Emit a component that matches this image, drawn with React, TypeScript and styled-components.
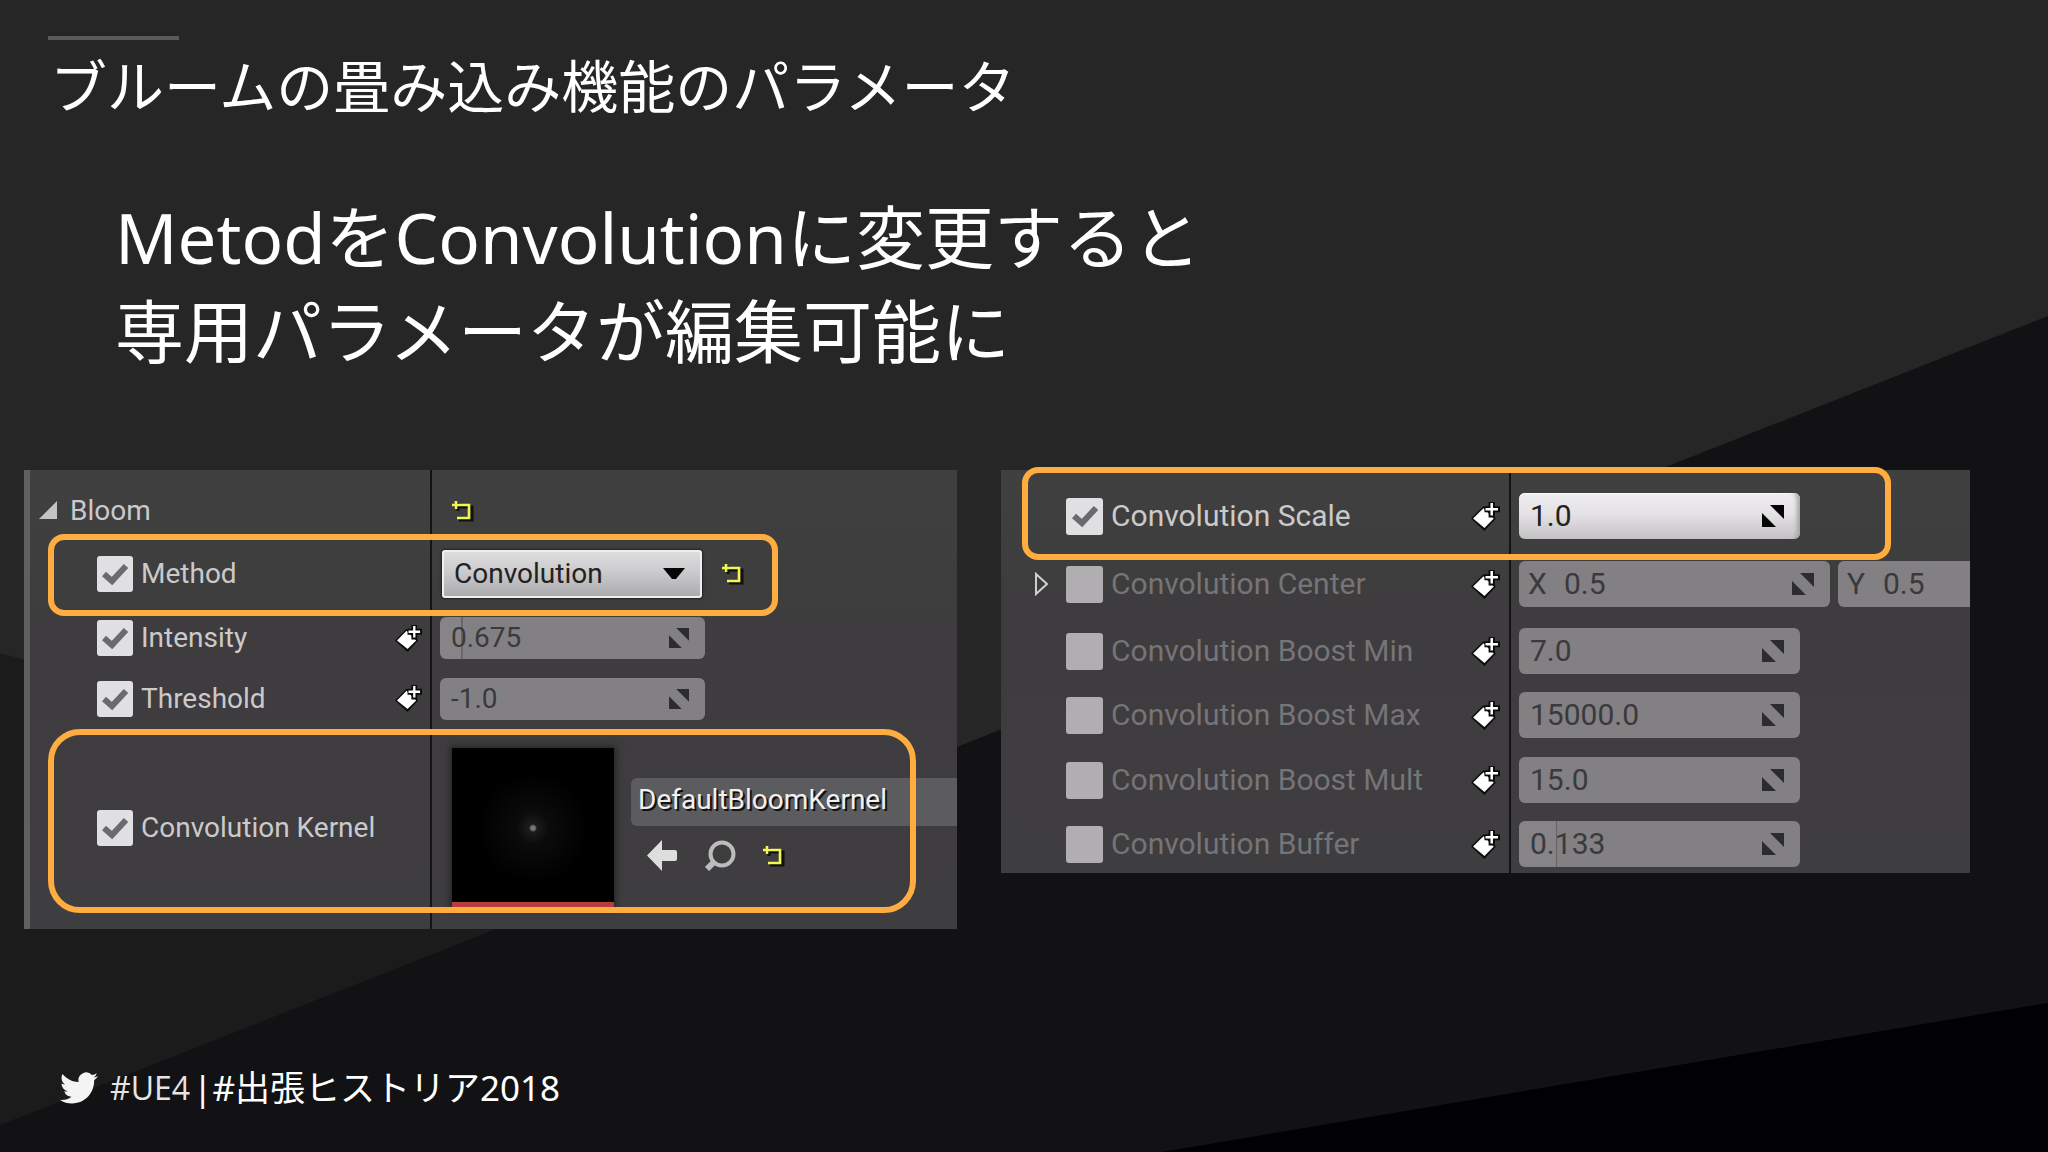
import React, { useState } from "react";
import styled, { createGlobalStyle, css } from "styled-components";

const GlobalStyle = createGlobalStyle`
  *, *::before, *::after { box-sizing: border-box; }
  html { background: #121114; }
  body { margin: 0; }
`;

const slideFont = `"Noto Sans", "Noto Sans CJK JP", sans-serif`;
const editorFont = `Roboto, "Noto Sans", sans-serif`;

const Slide = styled.main`
  position: relative;
  display: flex;
  flex-direction: column;
  min-height: 100vh;
  overflow: hidden;
  background: #262626;
  color: #fff;
  font-family: ${slideFont};
`;

const Backdrop = styled.svg`
  position: absolute;
  inset: 0;
  width: 100%;
  height: 100%;
`;

const Header = styled.header`
  position: relative;
  padding: 36px 48px 0;
`;

const Accent = styled.div`
  width: 131px;
  height: 4px;
  background: #5a5a5a;
`;

const Title = styled.h1`
  margin: 14px 0 0 2px;
  font-size: 57px;
  line-height: 64px;
  font-weight: 400;
`;

const Lead = styled.p`
  position: relative;
  margin: 72px 0 0;
  padding: 0 115px;
  font-size: 69px;
  line-height: 94px;
`;

const Panels = styled.div`
  position: relative;
  display: grid;
  grid-template-columns: 933fr 969fr;
  align-items: start;
  gap: 44px;
  margin-top: 92px;
  padding: 0 78px 0 24px;
`;

const Panel = styled.section<{ $split: number; $size: number; $edge?: boolean }>`
  min-width: 0;
  border-left: ${(p) => (p.$edge ? "6px solid #606060" : "0")};
  background: linear-gradient(#141414, #141414) ${(p) => p.$split}px 0 / 2px 100% no-repeat,
    linear-gradient(#3f403f, #3e3c3e 40%, #3e3d3f);
  font-family: ${editorFont};
  font-size: ${(p) => p.$size}px;
  line-height: 36px;
`;

const BloomPanel = styled(Panel)`
  padding: 9px 0 1px;
`;

const ScalePanel = styled(Panel)`
  padding: 23px 0 6px;
  display: grid;
  grid-template-rows: 68px 67px 64px 65px 64px 46px;
  align-items: start;
`;

const Row = styled.div<{ $label: number; $height: number }>`
  position: relative;
  display: grid;
  grid-template-columns: ${(p) => p.$label}px minmax(0, 1fr);
  align-items: center;
  height: ${(p) => p.$height}px;
`;

const NameCell = styled.div<{ $indent: number; $end?: number }>`
  display: flex;
  align-items: center;
  gap: 8px;
  padding-left: ${(p) => p.$indent}px;
  padding-right: ${(p) => p.$end ?? 0}px;
`;

const ValueCell = styled.div<{ $pad: number; $gap?: number }>`
  display: flex;
  align-items: center;
  gap: ${(p) => p.$gap ?? 20}px;
  min-width: 0;
  padding-left: ${(p) => p.$pad}px;
`;

const Name = styled.label<{ $dim?: boolean }>`
  flex: 1;
  white-space: nowrap;
  color: ${(p) => (p.$dim ? "#757477" : "#cbcacb")};
`;

const GroupName = styled.h2`
  margin: 0 0 0 4px;
  font: inherit;
  color: #cbcacb;
`;

const IconButton = styled.button`
  display: flex;
  flex: none;
  padding: 0;
  border: 0;
  background: none;
  cursor: pointer;
`;

const Highlight = styled.div<{ $top: number; $bottom: number; $left: number; $width: number; $radius: number }>`
  position: absolute;
  z-index: 1;
  top: ${(p) => p.$top}px;
  bottom: ${(p) => p.$bottom}px;
  left: ${(p) => p.$left}px;
  width: ${(p) => p.$width}px;
  border: 6px solid #ffac41;
  border-radius: ${(p) => p.$radius}px;
  pointer-events: none;
`;

const Stack = styled.span`
  display: grid;
  flex: none;
  align-items: center;
  > * { grid-area: 1 / 1; }
  > svg { pointer-events: none; }
`;

const Box = styled.input<{ $size: number }>`
  appearance: none;
  width: ${(p) => p.$size}px;
  height: ${(p) => p.$size}px;
  margin: 0;
  border-radius: 3px;
  background: #b0aeb1;
  &:checked { background: #e0dfe1; }
`;

const Tick = styled.svg`
  justify-self: center;
`;

const Field = styled.div<{ $width?: number; $height: number; $lit?: boolean; $fill?: number }>`
  display: flex;
  align-items: center;
  flex: ${(p) => (p.$width ? "none" : "1")};
  width: ${(p) => (p.$width ? `${p.$width}px` : "auto")};
  min-width: 0;
  height: ${(p) => p.$height}px;
  padding: 0 16px 0 11px;
  border-radius: ${(p) => (p.$width ? "6px" : "6px 0 0 6px")};
  background: #828083;
  color: #3a393b;
  ${(p) =>
    p.$fill &&
    css`
      background: linear-gradient(
        to right,
        #868487 ${p.$fill}%,
        #646265 ${p.$fill}%,
        #646265 calc(${p.$fill}% + 1px),
        #828083 calc(${p.$fill}% + 2px)
      );
    `}
  ${(p) =>
    p.$lit &&
    css`
      background: linear-gradient(#efedef, #e4e2e4 45%, #c4c2c4);
      box-shadow: inset -6px 0 4px -3px #a5a3a5, inset 0 1px 0 #fff;
      color: #222;
    `}
`;

const Axis = styled.span`
  width: 36px;
  margin-left: -2px;
  flex: none;
`;

const ValueInput = styled.input`
  flex: 1;
  min-width: 0;
  width: 0;
  padding: 0;
  border: 0;
  outline: 0;
  background: none;
  color: inherit;
  font: inherit;
`;

const Select = styled.select`
  appearance: none;
  width: 260px;
  height: 48px;
  padding: 0 48px 0 10px;
  border: 2px solid #efeff0;
  border-radius: 3px;
  background: linear-gradient(#dddcde, #cbcacc 45%, #acabad);
  box-shadow: 0 0 2px 1px #222;
  color: #222;
  font: inherit;
`;

const Caret = styled.svg`
  justify-self: end;
  margin-right: 17px;
`;

const Thumb = styled.div`
  flex: none;
  width: 162px;
  height: 160px;
  border-bottom: 6px solid #b83c3c;
  background: radial-gradient(circle at 50% 52%, #777 0 2px, #1c1c1c 4px, #0b0b0b 16px, #000 56px);
  box-shadow: 0 0 6px 2px #262626;
`;

const Asset = styled.div`
  flex: 1;
  min-width: 0;
  padding-bottom: 6px;
`;

const AssetName = styled.div`
  height: 48px;
  padding-left: 7px;
  border-radius: 6px 0 0 6px;
  background: #5c5b5d;
  color: #f0f0f0;
  line-height: 44px;
  text-shadow: 2px 2px 0 #111;
`;

const AssetTools = styled.div`
  display: flex;
  align-items: center;
  gap: 27px;
  margin-top: 14px;
  padding-left: 16px;
`;

const Footer = styled.footer`
  position: relative;
  display: flex;
  align-items: center;
  margin-top: auto;
  padding: 0 60px 41px;
  font-size: 35px;
  line-height: 46px;
`;

const Engine = styled.span`
  margin: 0 3px 0 12px;
  font-family: "Open Sans", sans-serif;
  font-size: 32px;
  font-weight: 500;
  color: #e4e4e4;
`;

function ResetIcon() {
  return (
    <svg width="22" height="22" viewBox="0 0 22 22" fill="none" strokeWidth="3">
      <path d="M1 6H19V19H6M5 2V10" stroke="#111" transform="translate(1 1)" />
      <path d="M0 5H17V18H5M4 1V9" stroke="#f2f752" strokeWidth="2.6" />
    </svg>
  );
}

function KeyIcon({ size }: { size: number }) {
  return (
    <svg width={size} height={size} viewBox="0 0 28 28">
      <path d="M0 16 12 4 24 16 13 28Z" fill="#0b0b0b" />
      <path d="M2 16 12 6 22 16 13 25Z" fill="#fff" />
      <path d="M20 0V15M13 7H28" stroke="#0b0b0b" strokeWidth="6" />
      <path d="M20 1V13M14 7H26" stroke="#fff" strokeWidth="2.4" />
    </svg>
  );
}

function SpinIcon({ size, color }: { size: number; color: string }) {
  return (
    <svg width={size} height={size} viewBox="0 0 22 22" fill={color}>
      <path d="M8 0H22V14Z" />
      <path d="M0 8V22H14Z" />
    </svg>
  );
}

function Check({ id, size, on }: { id: string; size: number; on?: boolean }) {
  const [checked, setChecked] = useState(!!on);
  return (
    <Stack>
      <Box id={id} type="checkbox" $size={size} checked={checked} onChange={() => setChecked(!checked)} />
      {checked && (
        <Tick width="26" height="24" viewBox="0 0 26 24">
          <path d="M2 12 10 19 24 4" fill="none" stroke="#6b6a6c" strokeWidth="6" />
        </Tick>
      )}
    </Stack>
  );
}

function NumberField(props: {
  label: string;
  value: string;
  width?: number;
  height: number;
  icon: number;
  lit?: boolean;
  fill?: number;
  axis?: string;
}) {
  return (
    <Field $width={props.width} $height={props.height} $lit={props.lit} $fill={props.fill}>
      {props.axis && <Axis>{props.axis}</Axis>}
      <ValueInput aria-label={props.label} defaultValue={props.value} />
      {props.width && <SpinIcon size={props.icon} color={props.lit ? "#050505" : "#2c2b2d"} />}
    </Field>
  );
}

const bloomNumbers = [
  { name: "Intensity", value: "0.675", height: 64, fill: 8 },
  { name: "Threshold", value: "-1.0", height: 57 },
];

const scaleNumbers = [
  { name: "Convolution Boost Min", value: "7.0" },
  { name: "Convolution Boost Max", value: "15000.0" },
  { name: "Convolution Boost Mult", value: "15.0" },
  { name: "Convolution Buffer", value: "0.133", fill: 13 },
];

const idOf = (name: string) => name.toLowerCase().replace(/ /g, "-");

function Bloom() {
  return (
    <BloomPanel $split={400} $size={28} $edge>
      <Row $label={402} $height={63}>
        <NameCell $indent={9}>
          <IconButton aria-label="Collapse Bloom">
            <svg width="19" height="19" viewBox="0 0 19 19">
              <path d="M18 0V18H0Z" fill="#c4c4c4" />
            </svg>
          </IconButton>
          <GroupName>Bloom</GroupName>
        </NameCell>
        <ValueCell $pad={20}>
          <IconButton aria-label="Reset Bloom"><ResetIcon /></IconButton>
        </ValueCell>
      </Row>
      <Row $label={402} $height={64}>
        <NameCell $indent={67}>
          <Check id="method-on" size={36} on />
          <Name htmlFor="method-on">Method</Name>
        </NameCell>
        <ValueCell $pad={10}>
          <Stack>
            <Select aria-label="Method" defaultValue="Convolution">
              <option>Convolution</option>
              <option>Standard</option>
            </Select>
            <Caret width="22" height="12" viewBox="0 0 22 12">
              <path d="M0 0H22L13 11H9Z" fill="#050505" />
            </Caret>
          </Stack>
          <IconButton aria-label="Reset Method"><ResetIcon /></IconButton>
        </ValueCell>
        <Highlight $top={-8} $bottom={-10} $left={18} $width={730} $radius={16} />
      </Row>
      {bloomNumbers.map((n) => (
        <Row key={n.name} $label={402} $height={n.height}>
          <NameCell $indent={67} $end={10}>
            <Check id={idOf(n.name)} size={36} on />
            <Name htmlFor={idOf(n.name)}>{n.name}</Name>
            <IconButton aria-label={`Add key for ${n.name}`}><KeyIcon size={27} /></IconButton>
          </NameCell>
          <ValueCell $pad={8}>
            <NumberField label={n.name} value={n.value} width={265} height={42} icon={20} fill={n.fill} />
          </ValueCell>
        </Row>
      ))}
      <Row $label={402} $height={201}>
        <NameCell $indent={67}>
          <Check id="kernel-on" size={36} on />
          <Name htmlFor="kernel-on">Convolution Kernel</Name>
        </NameCell>
        <ValueCell $pad={20} $gap={17}>
          <Thumb />
          <Asset>
            <AssetName>DefaultBloomKernel</AssetName>
            <AssetTools>
              <IconButton aria-label="Use selected asset">
                <svg width="31" height="31" viewBox="0 0 31 31">
                  <path d="M0 15.500 15 0V10H28Q30 10 30 12V19Q30 21 28 21H15V31Z" fill="#dedede" />
                </svg>
              </IconButton>
              <IconButton aria-label="Find in content browser">
                <svg width="31" height="31" viewBox="0 0 31 31" fill="none" stroke="#bcbcbc">
                  <circle cx="17" cy="14" r="11.500" strokeWidth="4" />
                  <path d="M9 22 2 29" strokeWidth="6" />
                </svg>
              </IconButton>
              <IconButton aria-label="Reset Convolution Kernel"><ResetIcon /></IconButton>
            </AssetTools>
          </Asset>
        </ValueCell>
        <Highlight $top={2} $bottom={15} $left={18} $width={868} $radius={32} />
      </Row>
    </BloomPanel>
  );
}

function ConvolutionSettings() {
  return (
    <ScalePanel $split={508} $size={30}>
      <Row $label={510} $height={46}>
        <NameCell $indent={65} $end={11}>
          <Check id="scale-on" size={37} on />
          <Name htmlFor="scale-on">Convolution Scale</Name>
          <IconButton aria-label="Add key for Convolution Scale"><KeyIcon size={29} /></IconButton>
        </NameCell>
        <ValueCell $pad={8}>
          <NumberField label="Convolution Scale" value="1.0" width={281} height={46} icon={22} lit />
        </ValueCell>
        <Highlight $top={-26} $bottom={-21} $left={21} $width={869} $radius={16} />
      </Row>
      <Row $label={510} $height={46}>
        <NameCell $indent={34} $end={11}>
          <IconButton aria-label="Expand Convolution Center">
            <svg width="15" height="24" viewBox="0 0 15 24">
              <path d="M1 2V22L12 12Z" fill="none" stroke="#d0d0d0" strokeWidth="2" />
            </svg>
          </IconButton>
          <span />
          <Check id="center-on" size={37} />
          <Name $dim htmlFor="center-on">Convolution Center</Name>
          <IconButton aria-label="Add key for Convolution Center"><KeyIcon size={29} /></IconButton>
        </NameCell>
        <ValueCell $pad={8} $gap={8}>
          <NumberField label="Convolution Center X" value="0.5" axis="X" width={311} height={46} icon={22} />
          <NumberField label="Convolution Center Y" value="0.5" axis="Y" height={46} icon={22} />
        </ValueCell>
      </Row>
      {scaleNumbers.map((n) => (
        <Row key={n.name} $label={510} $height={46}>
          <NameCell $indent={65} $end={11}>
            <Check id={idOf(n.name)} size={37} />
            <Name $dim htmlFor={idOf(n.name)}>{n.name}</Name>
            <IconButton aria-label={`Add key for ${n.name}`}><KeyIcon size={29} /></IconButton>
          </NameCell>
          <ValueCell $pad={8}>
            <NumberField label={n.name} value={n.value} width={281} height={46} icon={22} fill={n.fill} />
          </ValueCell>
        </Row>
      ))}
    </ScalePanel>
  );
}

export default function App() {
  return (
    <>
      <GlobalStyle />
      <Slide>
        <Backdrop viewBox="0 0 2048 1152" preserveAspectRatio="none" aria-hidden="true">
          <path d="M0 653 700 848 0 1152Z" fill="#1b1b1b" />
          <path d="M2048 316V1152H0V1125Z" fill="#121114" />
          <path d="M2048 1003V1152H1162Z" fill="#010002" />
        </Backdrop>
        <Header>
          <Accent />
          <Title lang="ja">ブルームの畳み込み機能のパラメータ</Title>
        </Header>
        <Lead lang="ja">
          MetodをConvolutionに変更すると
          <br />
          専用パラメータが編集可能に
        </Lead>
        <Panels>
          <Bloom />
          <ConvolutionSettings />
        </Panels>
        <Footer lang="ja">
          <svg width="38" height="32" viewBox="0 2 24 20" fill="#f4f4f4" aria-hidden="true">
            <path d="M23.953 4.570a10 10 0 0 1-2.825.775 4.958 4.958 0 0 0 2.163-2.723c-.951.555-2.005.959-3.127 1.184a4.920 4.920 0 0 0-8.384 4.482C7.690 8.095 4.067 6.130 1.640 3.162a4.822 4.822 0 0 0-.666 2.475c0 1.710.870 3.213 2.188 4.096a4.904 4.904 0 0 1-2.228-.616v.060a4.923 4.923 0 0 0 3.946 4.827 4.996 4.996 0 0 1-2.212.085 4.936 4.936 0 0 0 4.604 3.417 9.867 9.867 0 0 1-6.102 2.105c-.390 0-.779-.023-1.170-.067a13.995 13.995 0 0 0 7.557 2.209c9.053 0 13.998-7.496 13.998-13.985 0-.210 0-.420-.015-.630a9.935 9.935 0 0 0 2.460-2.548z" />
          </svg>
          <Engine>#UE4</Engine>
          <span>|</span>
          <span>#出張ヒストリア2018</span>
        </Footer>
      </Slide>
    </>
  );
}
